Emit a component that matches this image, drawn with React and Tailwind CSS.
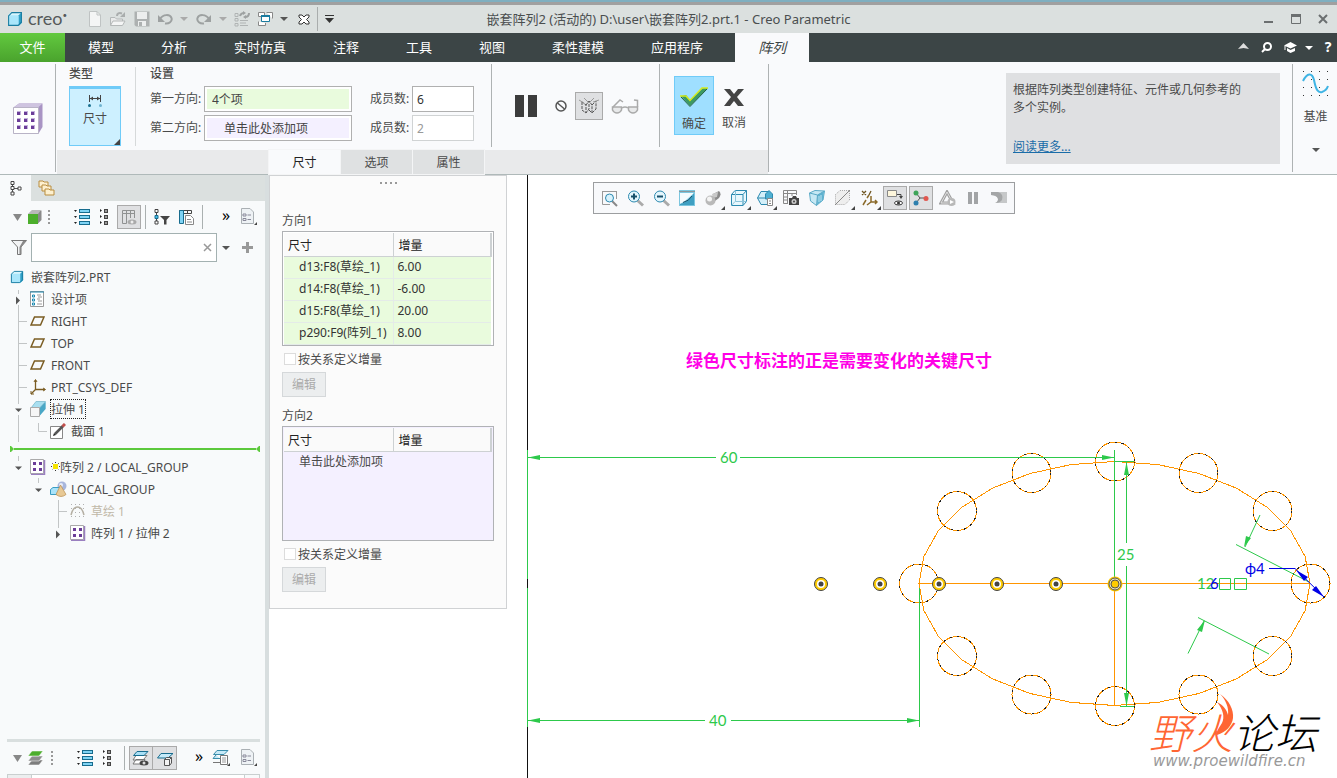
import React, { useState } from 'react';
import clsx from 'clsx';

const MENU_ITEMS = ['模型', '分析', '实时仿真', '注释', '工具', '视图', '柔性建模', '应用程序'];

const DIRECTION_1 = [
  { name: 'd13:F8(草绘_1)', value: '6.00' },
  { name: 'd14:F8(草绘_1)', value: '-6.00' },
  { name: 'd15:F8(草绘_1)', value: '20.00' },
  { name: 'p290:F9(阵列_1)', value: '8.00' },
];

const Svg = ({ w = 16, h = 16, className, children }) => (
  <svg
    width={w}
    height={h}
    viewBox={`0 0 ${w} ${h}`}
    fill="none"
    className={clsx('shrink-0', className)}
    aria-hidden="true"
  >
    {children}
  </svg>
);

const Down = ({ color = '#555' }) => (
  <Svg w={8} h={4}>
    <path d="M0 0H8L4 4Z" fill={color} />
  </Svg>
);

const BlueCube = ({ size = 15 }) => (
  <svg width={size} height={size} viewBox="0 0 15 15" fill="none" className="shrink-0" aria-hidden="true">
    <path d="M1 4L4 1H14V11L11 14H1Z" fill="#a9e6fb" />
    <path d="M1 4L4 1H14L11 4Z" fill="#d8f5fd" />
    <path d="M11 4L14 1V11L11 14Z" fill="#2f9fc6" />
    <path d="M1.500 4.500L4.500 1.500H13.500V10.500L10.500 13.500H1.500Z" stroke="#1a7ca0" />
  </svg>
);

/* ---------- title bar icons ---------- */

const NewIcon = () => (
  <Svg>
    <path d="M2.500 .5H10L13.500 4V15.500H2.500Z" fill="#f4f5f5" stroke="#bfc3c3" />
    <path d="M10 .5V4H13.500" stroke="#bfc3c3" />
  </Svg>
);

const OpenIcon = () => (
  <Svg>
    <path d="M.5 14.500V6.500H5L6.500 8H12.500V10" fill="#e9eaea" stroke="#b4b8b8" />
    <path d="M.5 14.500L3 10H15L12.500 14.500Z" fill="#f4f5f5" stroke="#b4b8b8" />
    <path d="M7 5C7 2.500 9 1.500 12 2.500" stroke="#a9adad" strokeWidth="2" />
    <path d="M10 6H15V1Z" fill="#a9adad" />
  </Svg>
);

const SaveIcon = () => (
  <Svg>
    <path d="M.5 .5H15.500V15.500H2L.5 14Z" fill="#adb1b1" />
    <path d="M3 1H13V8H3Z" fill="#eceeee" />
    <path d="M4 10H12V15H4Z" fill="#eceeee" />
    <path d="M5 11H8V15H5Z" fill="#adb1b1" />
  </Svg>
);

const UndoIcon = ({ flip }) => (
  <Svg className={flip ? '-scale-x-100' : ''}>
    <path d="M3 8C6 3 13 3 14.500 7C15.500 10.500 12 13 8 12.500" stroke="#9da1a1" strokeWidth="2" />
    <path d="M1 4V11H8Z" fill="#9da1a1" />
  </Svg>
);

const RegenIcon = () => (
  <Svg>
    <path d="M1 2.500H4V5.500H1ZM1 7.500H4V10H1ZM1 12.500H4V15H1Z" stroke="#b0b4b4" />
    <path d="M6 9.500H14M6 12H12M6 14.500H14" stroke="#b0b4b4" />
    <path d="M6 5C7 2 9 2 10 2M15 2C15 5 13 6 11 6" stroke="#9da1a1" strokeWidth="2" />
    <path d="M9 0L12 2L9 4ZM12 4L9 6L12 8Z" fill="#9da1a1" />
  </Svg>
);

const WindowsIcon = () => (
  <Svg>
    <path d="M1.500 1.500H7.500V5.500H1.500ZM9.500 1.500H15.500V7.500M1.500 10.500V14.500H8.500V12" fill="#fff" stroke="#888" />
    <path d="M4.500 4.500H12.500V10.500H4.500Z" fill="#fff" stroke="#1a7ca0" />
    <path d="M4 4H13V6H4Z" fill="#1a7ca0" />
  </Svg>
);

const CloseWinIcon = () => (
  <Svg w={12} h={11}>
    <path d="M1 1H4L6 3L8 1H11V3L8.500 5.500L11 8V10H8L6 8L4 10H1V8L3.500 5.500L1 3Z" fill="#fff" stroke="#333" />
  </Svg>
);

/* ---------- ribbon icons ---------- */

const PatternBig = () => (
  <Svg w={30} h={31}>
    <path d="M.5 4.500L6 .5H29.500V24L25.500 30.500H.5Z" fill="#a994c4" />
    <path d="M.5 4.500L6 .5H29.500L25 4.500Z" fill="#cfc4e0" />
    <path d="M.5 4.500H25.500V30.500H.5Z" fill="#fff" stroke="#b9b3c6" />
    {[9, 16, 23].map((y) =>
      [4, 11, 18].map((x) => (
        <g key={`${x}-${y}`}>
          <rect x={x} y={y - 1} width="4" height="4" fill="#c3b1dc" />
          <rect x={x} y={y} width="3" height="3" fill="#6b3d98" />
        </g>
      ))
    )}
  </Svg>
);

const DimensionIcon = () => (
  <Svg w={14} h={14}>
    <path d="M1.500 1V8M12.500 1V8M2 4.500H12" stroke="#444" />
    <path d="M2 4.500L5 2.500V6.500ZM12 4.500L9 2.500V6.500Z" fill="#444" />
    <circle cx="1.500" cy="11.500" r="1.500" fill="#1a7090" />
    <circle cx="12.500" cy="11.500" r="1.500" fill="#6fb3d0" />
  </Svg>
);

const NoIcon = () => (
  <Svg w={12} h={12}>
    <circle cx="6" cy="6" r="5" stroke="#555" strokeWidth="1.500" />
    <path d="M2.500 3L9.500 9" stroke="#555" strokeWidth="1.500" />
  </Svg>
);

const AttachedIcon = () => (
  <Svg w={20} h={18}>
    <path d="M3 5V13L7 16V8ZM7 8L10 4V12L7 16M10 13L13 16V8L10 4M13 8L17 4V12L13 16" stroke="#555" strokeDasharray="3 1" />
    <path d="M0 3L5 6M5 1L10 6L15 1M14 5L20 3" stroke="#999" />
  </Svg>
);

const GlassesIcon = () => (
  <Svg w={28} h={16}>
    <path d="M1.500 9H10.500V12Q9 15 6 15Q3 15 1.500 12ZM17.500 9H26.500V12Q25 15 22 15Q19 15 17.500 12Z" fill="#e8e9ea" stroke="#aaa" strokeWidth="1.500" />
    <path d="M11 10Q14 8 17 10M2 9L9 2L12 4M26.500 9V2.500L23 2" stroke="#aaa" strokeWidth="1.500" />
  </Svg>
);

const CheckIcon = () => (
  <Svg w={30} h={22}>
    <path d="M2 10L7 9L11 14L24 2H29L11 20Z" fill="#3c9a63" />
    <path d="M1 10H7L11 14.500L23 2H29" stroke="#d4ec1c" strokeWidth="1.500" />
    <path d="M2 11L11 20.500L28 3" stroke="#24613d" />
  </Svg>
);

const CrossIcon = () => (
  <Svg w={20} h={17}>
    <path d="M0 0H6L10 5L14 0H20L13 8L20 17H14L10 12L6 17H0L7 8Z" fill="#444" />
  </Svg>
);

const CurveIcon = () => (
  <Svg w={27} h={27}>
    {[1, 9, 17, 25].map((y) => [1, 9, 17, 25].map((x) => <rect key={`${x}-${y}`} x={x} y={y} width="1" height="1" fill="#333" />))}
    <path d="M1 11C5 3 10 2 12 10C14 20 16 23 20 22C23 21 25 19 26 16" stroke="#3fb4e4" strokeWidth="2" />
  </Svg>
);

/* ---------- tree toolbar icons ---------- */

const TreeIcon = () => (
  <Svg w={12} h={16}>
    <path d="M2.500 4V12M4 8.500H8" stroke="#555" />
    <path d="M1 1.500H4V4.500H1ZM1 6.500H4V9.500H1ZM1 12H4V15H1ZM8 7H11V10H8Z" fill="#fff" stroke="#444" />
  </Svg>
);

const FoldersIcon = () => (
  <Svg w={17}>
    {[[1, 1], [4, 5], [7, 9]].map(([x, y]) => (
      <path key={x} d={`M${x} ${y}H${x + 4}L${x + 5} ${y + 1}H${x + 9}V${y + 6}H${x}Z`} fill="#fdf0cf" stroke="#b98d3e" />
    ))}
  </Svg>
);

const GreenCube = () => (
  <Svg w={14} h={14}>
    <path d="M.5 4L4 .5H13.500V10L10 13.500Z" fill="#8a8a8a" />
    <path d="M0 4L4 0H13L10 4Z" fill="#b9b9b9" />
    <rect x="0" y="4" width="10" height="10" fill="#4cae2c" />
  </Svg>
);

const Grip = () => (
  <Svg w={2} h={14}>
    <path d="M1 0V14" stroke="#999" strokeWidth="2" strokeDasharray="2 2" />
  </Svg>
);

const ExpandIcon = () => (
  <Svg>
    {[1, 7, 13].map((y) => (
      <g key={y}>
        <path d={`M0 ${y}H3L1.500 ${y + 2}Z`} fill="#222" />
        <rect x="5.500" y={y - 0.5} width="10" height="3" fill="#7fd3f4" stroke="#176c8e" />
      </g>
    ))}
  </Svg>
);

const CollapseIcon = () => (
  <Svg w={9}>
    {[1, 7, 13].map((y) => (
      <g key={y}>
        <path d={`M0 ${y - 1}V${y + 2}L2 ${y + 0.5}Z`} fill="#222" />
        <rect x="4.500" y={y - 0.5} width="3" height="3" fill="#999" stroke="#444" />
      </g>
    ))}
  </Svg>
);

const ColumnsEye = () => (
  <Svg>
    <path d="M1.500 1.500H13.500V4.500H1.500ZM1.500 4.500V14.500H5.500V1.500M9.500 1.500V9M13.500 4V9" stroke="#8f9191" />
    <ellipse cx="11" cy="13" rx="4.500" ry="2.500" fill="#aaa" />
    <circle cx="11" cy="13" r="1.500" fill="#eee" />
  </Svg>
);

const TreeFilter = () => (
  <Svg>
    <path d="M2.500 1V15" stroke="#444" />
    <path d="M1 .5H4V3.500H1ZM1 12H4V15H1Z" fill="#fff" stroke="#444" />
    <path d="M1 6.500H4V9.500H1Z" fill="#48bde8" stroke="#176c8e" />
    <path d="M6 7H16L12.500 11V15.500H10V11Z" fill="#444" />
  </Svg>
);

const TreeColumns = () => (
  <Svg>
    <path d="M1.500 1.500H13.500V4.500H1.500ZM9.500 1.500V5" stroke="#444" />
    <path d="M1.500 1.500H5.500V14.500H1.500Z" fill="#7fd3f4" stroke="#176c8e" />
    <path d="M7.500 6.500H12.500L15.500 9.500V15.500H7.500Z" fill="#fff" stroke="#888" />
    <path d="M9 10.500H13M9 13H14" stroke="#888" />
  </Svg>
);

const PageIcon = () => (
  <Svg w={18} h={18}>
    <path d="M1.500 .5H10L13.500 4V15.500H1.500Z" fill="#eef2f5" stroke="#aab0b4" />
    <path d="M3 6H6V8H3ZM3 10.500H6V12.500H3ZM7.500 7H11M7.500 11.500H11" stroke="#889" />
    <path d="M17 14V17H14Z" fill="#444" />
  </Svg>
);

const LayerSheet = ({ color, y }) => <path d={`M5 ${y}H16L12 ${y + 5}H1Z`} fill={color} stroke="#fff" strokeWidth=".5" />;

const LayersIcon = () => (
  <Svg w={17}>
    <LayerSheet color="#7d7d7d" y={10} />
    <LayerSheet color="#8d8d8d" y={6} />
    <LayerSheet color="#4cae2c" y={1} />
  </Svg>
);

const LayersEye = () => (
  <Svg w={18}>
    <path d="M4 9.500H13L10 14H1ZM4 5.500H15L11 10H1Z" fill="#fff" stroke="#777" />
    <path d="M5 1.500H16L12 5.500H1.500Z" fill="#a9dff5" stroke="#176c8e" />
    <ellipse cx="12" cy="13" rx="4.500" ry="2.500" fill="#444" />
    <circle cx="12" cy="13" r="1.500" fill="#ddd" />
  </Svg>
);

const LayerBox = () => (
  <Svg w={18}>
    <path d="M5 3.500H17L12 8H1.500Z" fill="#c6ebfa" stroke="#176c8e" />
    <path d="M8.500 9.500L10.500 7.500H15.500V13L13.500 15.500H8.500ZM8.500 9.500H13.500V15.500M13.500 9.500L15.500 7.500" fill="#f3f3f3" stroke="#555" />
  </Svg>
);

const LayerList = () => (
  <Svg w={18} h={18}>
    <path d="M4 9.500H8M4 5.500H8M1 13.500H8" stroke="#777" />
    <path d="M5 1.500H16L12 5.500H1.500ZM4 6L1 9.500H8" fill="#c6e9f7" stroke="#3a8dab" />
    <path d="M8.500 6.500H15.500V15.500H8.500Z" fill="#fff" stroke="#777" />
    <path d="M10 9H14M10 11H14M10 13H14" stroke="#999" />
    <path d="M18 14V17H15Z" fill="#444" />
  </Svg>
);

const FunnelIcon = () => (
  <Svg w={16} h={15}>
    <path d="M.5 .5H15.500L10 7V14.500H6.500V7Z" fill="#f2f3f4" stroke="#777" />
    <path d="M8.500 7V14H10V7L15 1H12Z" fill="#888" />
  </Svg>
);

/* ---------- model tree node icons ---------- */

const DesignItems = () => (
  <Svg w={14}>
    <path d="M.5 .5H13.500V15.500H.5Z" fill="#fff" stroke="#999" />
    <path d="M0 1H14" stroke="#1a88b0" />
    <path d="M2.500 4H4.500V6H2.500ZM2.500 8H4.500V10H2.500ZM2.500 12H4.500V14H2.500Z" stroke="#1a88b0" />
    <path d="M7 4H11M8 6H12M7 8H10M8 10H12M7 13H12" stroke="#999" />
  </Svg>
);

const DatumPlane = () => (
  <Svg w={15} h={10}>
    <path d="M4.500 1H14L10.500 9H1Z" stroke="#7a5c22" strokeWidth="1.500" />
  </Svg>
);

const CsysIcon = () => (
  <Svg>
    <path d="M5.500 1V10.500H15M5.500 10.500L1 15" stroke="#7a5c22" strokeWidth="1.300" />
    <path d="M4 3L5.500 .5L7 3M13 9L15.500 10.500L13 12M1 12V15H4" stroke="#7a5c22" />
  </Svg>
);

const ExtrudeIcon = () => (
  <Svg>
    <path d="M1 7L6 .5H15.500V8L9 15Z" fill="#7fc8e0" />
    <path d="M9 7L15.500 1V8L9.500 15Z" fill="#4aa7c6" />
    <path d="M1 7L6 .5H15.500L9.500 7Z" fill="#a9dff0" stroke="#7fb9cc" strokeWidth=".7" />
    <path d="M.5 6.500H9.500V15.500H.5Z" fill="#f6f6f6" stroke="#aaa" />
  </Svg>
);

const SectionIcon = () => (
  <Svg>
    <path d="M.5 3.500H12.500V15.500H.5Z" fill="#fff" stroke="#888" />
    <path d="M5 11L13 3" stroke="#555" strokeWidth="2.500" />
    <path d="M12.500 3.500L15 1" stroke="#c0504d" strokeWidth="3" />
    <path d="M3 13L4 10L6 12Z" fill="#222" />
  </Svg>
);

const PatternIcon = () => (
  <Svg>
    <path d="M.5 .5H13.500V14.500H.5Z" fill="#fff" stroke="#aaa" />
    <path d="M14.500 1V15.500H1" stroke="#9a7fc0" strokeWidth="1.500" />
    {[4, 10].map((y) => [3, 9].map((x) => <rect key={`${x}-${y}`} x={x} y={y - 1} width="3" height="3" fill="#6b3d98" />))}
  </Svg>
);

const GroupIcon = () => (
  <Svg w={17}>
    <circle cx="12" cy="5" r="4.500" fill="#a8b6dc" />
    <circle cx="11" cy="4" r="2" fill="#e6ebf8" />
    <path d="M.5 8.500L3 6.500H9.500V11.500L7.500 13.500H.5Z" fill="#a9e3fa" stroke="#3a9dc4" />
    <path d="M10.500 4L16 13.500Q11 17.500 6 13.500Z" fill="#e8c995" stroke="#b98d4e" strokeWidth=".7" />
  </Svg>
);

const SketchIcon = () => (
  <Svg>
    {[1, 5, 9, 13].map((y) => [1, 5, 9, 13].map((x) => <rect key={`${x}-${y}`} x={x} y={y} width="1" height="1" fill="#b0b0b0" />))}
    <path d="M1 12Q3 4 7.500 4Q12 4 14 12" stroke="#b5b0a4" strokeWidth="1.500" />
  </Svg>
);

/* ---------- graphics toolbar icons ---------- */

const Magnifier = ({ sign }) => (
  <Svg w={17} h={17}>
    <path d="M10 10L16 15.500" stroke="#aaa" strokeWidth="3" />
    <circle cx="7" cy="6.500" r="5.500" fill="#e4f6fd" stroke="#2d8ab0" />
    <path d={sign === '+' ? 'M4 6.500H10M7 3.500V9.500' : 'M4 6.500H10'} stroke="#17506a" strokeWidth="2" />
  </Svg>
);

const GRAPHICS_TOOLS = [
  {
    label: '重新调整',
    icon: (
      <Svg w={17} h={17}>
        <path d="M1 1.500H16M1.500 1V14.500H9M15.500 1V9" stroke="#999" />
        <path d="M11 11L16 16" stroke="#888" strokeWidth="2" />
        <circle cx="8.500" cy="8" r="4" fill="#d9f2fc" stroke="#2d8ab0" />
      </Svg>
    ),
  },
  { label: '放大', icon: <Magnifier sign="+" /> },
  { label: '缩小', icon: <Magnifier sign="-" /> },
  {
    label: '重画',
    icon: (
      <Svg>
        <path d="M0 0H16V16H0Z" fill="#7cc6df" />
        <path d="M1 3H15L6 11L1 14Z" fill="#f4fbfe" />
        <path d="M1 15V14Q10 12 15 3V15Z" fill="#3f9fc2" />
        <path d="M4 12.500Q10 11 13 6" stroke="#174f68" />
        <path d="M0 1.500H16" stroke="#8d979b" />
      </Svg>
    ),
  },
  {
    label: '显示样式',
    menu: true,
    icon: (
      <Svg>
        <path d="M8 4L14 1Q17 4 14 8L10 11Z" fill="#8a8a8a" />
        <path d="M7 4L13 2L12 7L8 8Z" fill="#c9c9c9" />
        <circle cx="5.500" cy="10.500" r="5" fill="#b9b9b9" />
        <circle cx="4.500" cy="9" r="2.500" fill="#f4f4f4" />
      </Svg>
    ),
  },
  {
    label: '隐藏线',
    menu: true,
    icon: (
      <Svg>
        <path d="M.5 4.500L4 .5H15.500V11.500L12 15.500H.5Z" fill="#e8f7fd" stroke="#2d8ab0" />
        <path d="M.5 4.500H12V15.500M12 4.500L15.500 .5" stroke="#2d8ab0" />
        <path d="M4.500 .5V11.500H15.500M4 11.500L.5 15.500" stroke="#8cc4da" />
      </Svg>
    ),
  },
  {
    label: '视图管理器',
    menu: true,
    icon: (
      <Svg>
        <path d="M.5 8L4 1.500H12L15.500 8L12 14.500H4Z" fill="#d3eff9" stroke="#2d8ab0" />
        <path d="M.5 8H9" stroke="#2d8ab0" />
        <path d="M8.500 4L12 .5L15.500 4V9H8.500Z" fill="#4fb0d2" stroke="#2d8ab0" />
        <path d="M10.500 8.500H15.500V15.500H10.500Z" fill="#fff" stroke="#888" />
        <path d="M12 11H14M12 13.500H14" stroke="#888" />
      </Svg>
    ),
  },
  {
    label: '透视图',
    icon: (
      <Svg>
        <path d="M.5 .5H13.500V5M.5 .5V13.500H5M.5 3.500H13.500M.5 7H5M.5 10H5M4.500 .5V13.500M9 3.500V6" stroke="#888" />
        <path d="M6 8H9L10 6H13L14 8H16V15H6Z" fill="#444" />
        <circle cx="11" cy="11.500" r="2.500" fill="#ccc" />
        <circle cx="11" cy="11.500" r="1" fill="#444" />
      </Svg>
    ),
  },
  {
    label: '截面',
    icon: (
      <Svg>
        <path d="M.5 3L6 .5L15.500 1L14 10L7.500 15.500L1.500 11Z" fill="#c6e8f4" stroke="#5aa9c6" />
        <path d="M8.500 5L15 1.500L14 10L8 15Z" fill="#5fb2d0" />
        <path d="M.5 3L8.500 5L15.500 1M8.500 5L7.500 15.500" stroke="#5aa9c6" />
        <path d="M10 6V12M12 5V11" stroke="#bfe6f3" />
      </Svg>
    ),
  },
  {
    label: '基准显示',
    menu: true,
    icon: (
      <Svg>
        <path d="M.5 4.500L5 .5H14.500V10L10 14.500H.5Z" stroke="#aaa" strokeDasharray="1 1" fill="#eee" />
        <path d="M0 15L15 0" stroke="#888" />
      </Svg>
    ),
  },
  {
    label: '基准过滤器',
    menu: true,
    icon: (
      <Svg w={17}>
        <path d="M1 1L5 5M5 1L1 5M10 1L8 5" stroke="#6e5420" strokeWidth="1.300" />
        <path d="M2 15L5 10M6 8L8 5M10 6V12H16M10 12L6 15M14 10L16 12L14 14" stroke="#8a6a2a" strokeWidth="1.500" />
      </Svg>
    ),
  },
  {
    label: '注释显示',
    pressed: true,
    icon: (
      <Svg>
        <path d="M.5 .5H9.500V6.500H.5Z" fill="#fdf6dc" stroke="#888" />
        <path d="M10 4.500H14V8" stroke="#444" />
        <path d="M12 6H16L14 9Z" fill="#444" />
        <ellipse cx="11.500" cy="13" rx="4" ry="2" stroke="#333" fill="#fff" />
        <circle cx="11.500" cy="13" r="1.500" fill="#333" />
      </Svg>
    ),
  },
  {
    label: '旋转中心',
    pressed: true,
    icon: (
      <Svg>
        <path d="M3 3L7 8L3 13M7 8H13" stroke="#555" />
        <circle cx="3" cy="3" r="2.500" fill="#3fa55a" />
        <circle cx="3" cy="13" r="2.500" fill="#2d7fae" />
        <circle cx="13" cy="8.500" r="2.500" fill="#e0574f" />
      </Svg>
    ),
  },
  {
    label: '仿真',
    icon: (
      <Svg w={17}>
        <path d="M8 2L14 13H2Z" stroke="#a0a0a0" strokeWidth="3" />
        <path d="M8 2L14 13H2Z" stroke="#e0e0e0" />
        <circle cx="12.500" cy="12" r="4" fill="#b8b8b8" />
        <path d="M11 10L15 12L11 14Z" fill="#fff" />
      </Svg>
    ),
  },
  {
    label: '暂停',
    icon: (
      <Svg>
        <path d="M3 2H7V14H3ZM9 2H13V14H9Z" fill="#a2a4a6" />
      </Svg>
    ),
  },
  {
    label: '继续',
    icon: (
      <Svg w={17} h={14}>
        <path d="M0 1H16V12H4Q7 11 7 8Q7 5 0 4Z" fill="#c6c8c9" />
        <path d="M0 1H7Q13 3 11 9Q9 12 4 12Q7 11 7 8Q6 4 0 4Z" fill="#a4a6a7" />
      </Svg>
    ),
  },
];

const TitleBar = () => (
  <header className="border-t-3 border-[#a0a0a0] bg-[#dbe0df]">
    <div className="grid h-7 grid-cols-[1fr_auto_1fr] items-center">
      <div className="flex items-center pl-[7px]">
        <BlueCube size={16} />
        <span className="ml-[5px] w-10 pb-[2px] font-['Lato',sans-serif] text-[18px] leading-5 text-[#55595a]">
          creo<sup className="align-[3px] text-[8px] leading-none">•</sup>
        </span>
        <div className="ml-[19px] flex items-center gap-[7px]">
          <button type="button" aria-label="新建"><NewIcon /></button>
          <button type="button" aria-label="打开"><OpenIcon /></button>
          <button type="button" aria-label="保存" className="ml-px"><SaveIcon /></button>
          <button type="button" aria-label="撤消"><UndoIcon /></button>
          <Down color="#aaa" />
          <button type="button" aria-label="重做" className="ml-px"><UndoIcon flip /></button>
          <Down color="#aaa" />
          <button type="button" aria-label="重新生成"><RegenIcon /></button>
          <button type="button" aria-label="窗口"><WindowsIcon /></button>
          <Down />
          <button type="button" aria-label="关闭窗口" className="ml-[3px]"><CloseWinIcon /></button>
          <span className="h-6 w-px bg-[#a9adad]" />
          <button type="button" aria-label="自定义">
            <Svg w={9} h={8}>
              <path d="M0 .5H9" stroke="#333" />
              <path d="M0 3H9L4.500 8Z" fill="#333" />
            </Svg>
          </button>
        </div>
      </div>
      <h1 className="text-[13px] leading-5 text-[#4a4e4f]">嵌套阵列2 (活动的) D:\user\嵌套阵列2.prt.1 - Creo Parametric</h1>
      <div className="flex items-center justify-end gap-[17px] pr-[9px] text-[#6b6f70]">
        <button type="button" aria-label="最小化">
          <Svg w={10} h={10}>
            <path d="M0 8H9" stroke="currentColor" strokeWidth="2" />
          </Svg>
        </button>
        <button type="button" aria-label="最大化">
          <Svg w={10} h={10}>
            <path d="M.5 .5H9.500V9.500H.5Z" stroke="currentColor" />
            <path d="M0 1.500H10" stroke="currentColor" strokeWidth="3" />
          </Svg>
        </button>
        <button type="button" aria-label="关闭">
          <Svg w={10} h={10}>
            <path d="M1 1L9 9M9 1L1 9" stroke="currentColor" strokeWidth="2" />
          </Svg>
        </button>
      </div>
    </div>
  </header>
);

const MenuBar = () => (
  <nav className="flex h-[29px] items-stretch bg-[#3c4546] text-[13px] text-white">
    <button type="button" className="w-[65px] bg-linear-to-b from-[#62c93f] to-[#4aa32d]">
      文件
    </button>
    <div className="ml-[23px] flex gap-[47px]">
      {MENU_ITEMS.map((item) => (
        <button key={item} type="button">
          {item}
        </button>
      ))}
    </div>
    <button type="button" className="ml-8 w-[74px] bg-[#f9fafc] text-[14px] text-[#3c4546] italic">
      阵列
    </button>
    <div className="ml-auto flex items-center gap-2 pr-[3px]">
      <button type="button" aria-label="最小化功能区" className="mr-1 pb-1">
        <Svg w={11} h={8}>
          <path d="M0 7L5.500 1L11 7L5.500 6Z" fill="#ddd" />
        </Svg>
      </button>
      <button type="button" aria-label="搜索" className="mr-1">
        <Svg w={11} h={11}>
          <circle cx="6.500" cy="4.500" r="3.500" stroke="#fff" strokeWidth="2" />
          <path d="M4 7L1 10" stroke="#fff" strokeWidth="2" />
        </Svg>
      </button>
      <button type="button" aria-label="学习">
        <Svg w={13} h={11}>
          <path d="M6.500 0L13 3.500L6.500 6.500L0 3.500Z" fill="#fff" />
          <path d="M3 6L6.500 8L11 6V9L6.500 11L3 9Z" fill="#fff" />
          <path d="M1 4V8" stroke="#fff" />
        </Svg>
      </button>
      <Down color="#fff" />
      <button type="button" aria-label="帮助" className="ml-px w-3 pb-[2px] text-[14px] font-bold">
        ?
      </button>
    </div>
  </nav>
);

const Divider = ({ className }) => <span className={clsx('w-px shrink-0 bg-[#aeb2b3]', className)} />;

const Collector = ({ id, label, value, tone }) => (
  <div className="flex h-[26px] items-center">
    <label htmlFor={id} className="w-[54px] whitespace-nowrap">
      {label}
    </label>
    <input
      id={id}
      defaultValue={value}
      className={clsx(
        'h-[26px] w-[148px] border border-[#b0b0b0] text-[#444] shadow-[inset_0_0_0_2px_white] outline-none',
        tone === 'green' ? 'bg-[#e9fbdd] pl-[7px]' : 'bg-[#f4f0ff] pl-[19px]'
      )}
    />
  </div>
);

const Count = ({ id, value, disabled }) => (
  <div className="flex h-[26px] items-center">
    <label htmlFor={id} className="w-[42px] whitespace-nowrap">
      成员数:
    </label>
    <input
      id={id}
      defaultValue={value}
      disabled={disabled}
      className="h-[26px] w-[62px] border border-[#b0b0b0] bg-white pl-1 text-[#333] outline-none disabled:border-[#d0d3d4] disabled:text-[#999]"
    />
  </div>
);

const Ribbon = ({ tab, setTab }) => (
  <section className="flex h-[113px] border-b border-[#afb9b9] bg-[#f9fafc] text-[12px] leading-4 text-[#4a4a4a]">
    <div className="flex w-[55px] items-center justify-center">
      <PatternBig />
    </div>
    <Divider className="my-[2px]" />
    <div className="mx-px flex w-[711px] flex-col">
      <div className="flex flex-1">
        <div className="flex w-[66px] flex-col pt-1 pl-3">
          <h2 className="h-5 font-medium">类型</h2>
          <button
            type="button"
            className="relative flex h-[60px] w-[52px] flex-col items-center border border-t-3 border-[#70cbf8] bg-[#cdf0ff] pt-[5px]"
          >
            <DimensionIcon />
            <span className="mt-[3px]">尺寸</span>
            <span className="absolute right-0 bottom-0">
              <Svg w={6} h={6}>
                <path d="M6 0V6H0Z" fill="#444" />
              </Svg>
            </span>
          </button>
        </div>
        <Divider className="mt-[5px] mb-1 ml-3 bg-[#d6d9da]" />
        <div className="flex flex-col pt-1 pl-[14px]">
          <h2 className="h-5 font-medium">设置</h2>
          <div className="flex gap-[18px]">
            <div className="flex flex-col gap-[3px]">
              <Collector id="dir1" label="第一方向:" value="4个项" tone="green" />
              <Collector id="dir2" label="第二方向:" value="单击此处添加项" />
            </div>
            <div className="flex flex-col gap-[3px]">
              <Count id="count1" value="6" />
              <Count id="count2" value="2" disabled />
            </div>
          </div>
        </div>
        <Divider className="mt-[2px] mb-[3px] ml-[17px]" />
        <div className="flex w-[167px] items-center gap-2 pl-[22px]">
          <button type="button" aria-label="暂停" className="mr-[9px]">
            <Svg w={24} h={22}>
              <path d="M1 0H10V22H1ZM14 0H23V22H14Z" fill="#3c3c3c" />
            </Svg>
          </button>
          <button type="button" aria-label="无预览"><NoIcon /></button>
          <button
            type="button"
            aria-label="预览"
            className="flex size-7 items-center justify-center border border-[#aaa] bg-[#dfe0e2]"
          >
            <AttachedIcon />
          </button>
          <button type="button" aria-label="校验"><GlassesIcon /></button>
        </div>
        <Divider className="mt-[2px] mb-[3px]" />
        <div className="flex gap-[7px] pt-[14px] pl-[14px]">
          <button type="button" className="flex h-[59px] w-10 flex-col items-center border border-[#70cbf8] bg-[#9fdfff] pt-[9px]">
            <CheckIcon />
            <span className="mt-2">确定</span>
          </button>
          <button type="button" className="flex h-[59px] w-[26px] flex-col items-center pt-[13px]">
            <CrossIcon />
            <span className="mt-[9px] whitespace-nowrap">取消</span>
          </button>
        </div>
      </div>
      <div className="flex h-6 gap-px bg-[#e9eaeb] pl-[212px]">
        {['尺寸', '选项', '属性'].map((name) => (
          <button
            key={name}
            type="button"
            onClick={() => setTab(name)}
            className={clsx(
              'w-[71px] pt-[2px] outline outline-[#f4f5f6]',
              tab === name ? 'bg-[#f9fafc] text-[#222]' : 'bg-[#dfe1e2]'
            )}
          >
            {name}
          </button>
        ))}
      </div>
    </div>
    <Divider className="my-[2px] -ml-px" />
    <aside className="mt-[11px] mr-3 mb-[10px] ml-auto w-[274px] bg-[#dfe0e2] px-[7px] pt-2 leading-[18px]">
      <p className="w-[236px]">根据阵列类型创建特征、元件或几何参考的多个实例。</p>
      <a href="#more" className="mt-[21px] block text-[#1a6ca8] underline">
        阅读更多...
      </a>
    </aside>
    <Divider className="my-[2px]" />
    <button type="button" className="flex w-[44px] flex-col items-center pt-2 pl-px">
      <CurveIcon />
      <span className="mt-3 mb-[23px]">基准</span>
      <Down />
    </button>
  </section>
);

const GUIDES = {
  line: 'M8.500 0V22',
  tee: 'M8.500 0V22M8.500 11.500H17',
  elbow: 'M8.500 3V11.500H17',
  stub: 'M8.500 0V5',
  open: 'M8.500 0V6M8.500 17V22',
  closed: 'M8.500 2V6M8.500 17V22',
  last: 'M8.500 0V6',
  blank: '',
};

const Guide = ({ kind }) => (
  <Svg w={20} h={22}>
    <path d={GUIDES[kind]} stroke="#c2c5c6" />
    {(kind === 'open' || kind === 'stub') && <path d="M5 10.500H12L8.500 14Z" fill="#555" />}
    {(kind === 'closed' || kind === 'last') && <path d="M6 8.500V16.500L10 12.500Z" fill="#555" />}
  </Svg>
);

const TreeRow = ({ guides = [], icon, children, selected, dim }) => (
  <li className={clsx('flex h-[22px] items-center pl-[10px]', dim ? 'text-[#c0b8a8]' : 'text-[#4a4a4a]')}>
    {guides.map((kind, i) => (
      <Guide key={i} kind={kind} />
    ))}
    <span className="flex w-[21px] shrink-0 items-center">{icon}</span>
    <span className={clsx('pt-[2px] whitespace-nowrap', selected && 'outline outline-dotted outline-[#222]')}>
      {children}
    </span>
  </li>
);

const ToolbarDivider = () => <span className="h-6 w-px shrink-0 bg-[#aab0b0]" />;

const ModelTree = () => {
  const [filter, setFilter] = useState('');
  return (
    <aside className="flex w-[269px] shrink-0 flex-col border-r-4 border-[#d8dedf] bg-[#f8fafb] text-[12px] leading-4">
      <div className="flex h-[26px] bg-[#dbe0df]">
        <button type="button" aria-label="模型树" className="flex w-[31px] items-center justify-center bg-[#f8fafb]">
          <TreeIcon />
        </button>
        <button type="button" aria-label="文件夹浏览器" className="flex w-[31px] items-center justify-center">
          <FoldersIcon />
        </button>
      </div>
      <div className="flex h-8 items-center pl-[13px]">
        <Svg w={9} h={7}>
          <path d="M0 0H9L4.500 7Z" fill="#888" />
        </Svg>
        <button type="button" aria-label="模型" className="ml-[6px]"><GreenCube /></button>
        <span className="ml-[6px]"><Grip /></span>
        <button type="button" aria-label="全部展开" className="ml-6"><ExpandIcon /></button>
        <button type="button" aria-label="全部折叠" className="ml-[10px]"><CollapseIcon /></button>
        <button type="button" aria-label="树列" className="ml-2 flex size-6 items-center justify-center border border-[#aaa] bg-[#dfe0e2]">
          <ColumnsEye />
        </button>
        <span className="ml-1 flex"><ToolbarDivider /></span>
        <button type="button" aria-label="树过滤器" className="ml-2"><TreeFilter /></button>
        <button type="button" aria-label="树设置" className="ml-2"><TreeColumns /></button>
        <span className="ml-2 flex"><ToolbarDivider /></span>
        <button type="button" aria-label="更多" className="ml-[19px] pb-1 text-[16px] leading-4">»</button>
        <button type="button" aria-label="显示" className="ml-[10px]"><PageIcon /></button>
      </div>
      <div className="flex h-[29px] items-center pl-[11px]">
        <FunnelIcon />
        <div className="relative ml-1 h-[29px] flex-1">
          <input
            aria-label="过滤模型树"
            value={filter}
            onChange={(e) => setFilter(e.target.value)}
            className="h-full w-full border border-[#a3b1b1] bg-white px-1 outline-none"
          />
          <button type="button" aria-label="清除" onClick={() => setFilter('')} className="absolute top-[10px] right-[5px]">
            <Svg w={9} h={9}>
              <path d="M1 1L8 8M8 1L1 8" stroke="#999" strokeWidth="1.500" />
            </Svg>
          </button>
        </div>
        <button type="button" aria-label="过滤器选项" className="mr-3 ml-[5px]"><Down /></button>
        <button type="button" aria-label="添加" className="mr-3">
          <Svg w={11} h={11}>
            <path d="M0 5.500H11M5.500 0V11" stroke="#999" strokeWidth="3" />
          </Svg>
        </button>
      </div>
      <ul className="mt-1">
        <TreeRow icon={<BlueCube size={14} />}>嵌套阵列2.PRT</TreeRow>
        <TreeRow guides={['closed']} icon={<DesignItems />}>设计项</TreeRow>
        <TreeRow guides={['tee']} icon={<DatumPlane />}>RIGHT</TreeRow>
        <TreeRow guides={['tee']} icon={<DatumPlane />}>TOP</TreeRow>
        <TreeRow guides={['tee']} icon={<DatumPlane />}>FRONT</TreeRow>
        <TreeRow guides={['tee']} icon={<CsysIcon />}>PRT_CSYS_DEF</TreeRow>
        <TreeRow guides={['open']} icon={<ExtrudeIcon />} selected>拉伸 1</TreeRow>
        <TreeRow guides={['line', 'elbow']} icon={<SectionIcon />}>截面 1</TreeRow>
        <li className="mr-[5px] ml-[10px] flex h-[14px] items-end pb-1">
          <Svg w={4} h={6}>
            <path d="M0 0H1L4 3L1 6H0Z" fill="#5cc93c" />
          </Svg>
          <span className="mb-[2px] h-[2px] flex-1 bg-[#5cc93c]" />
          <Svg w={4} h={6}>
            <path d="M4 0H3L0 3L3 6H4Z" fill="#5cc93c" />
          </Svg>
        </li>
        <TreeRow guides={['stub']} icon={<PatternIcon />}>
          <Svg w={9} h={9} className="mb-1 inline-block">
            <path d="M4.500 0V9M0 4.500H9M1 1L8 8M8 1L1 8" stroke="#333" strokeDasharray="1 1" />
            <rect x="2" y="2" width="5" height="5" fill="#f5e400" />
          </Svg>
          阵列 2 / LOCAL_GROUP
        </TreeRow>
        <TreeRow guides={['blank', 'stub']} icon={<GroupIcon />}>LOCAL_GROUP</TreeRow>
        <TreeRow guides={['blank', 'blank', 'tee']} icon={<SketchIcon />} dim>草绘 1</TreeRow>
        <TreeRow guides={['blank', 'blank', 'last']} icon={<PatternIcon />}>阵列 1 / 拉伸 2</TreeRow>
      </ul>
      <div className="mt-auto mr-[5px] ml-[7px] h-[3px] shrink-0 bg-[#d9dfdf]" />
      <div className="flex h-8 shrink-0 items-center pl-[13px]">
        <Svg w={9} h={7}>
          <path d="M0 0H9L4.500 7Z" fill="#888" />
        </Svg>
        <button type="button" aria-label="层" className="ml-[5px]"><LayersIcon /></button>
        <span className="ml-[7px]"><Grip /></span>
        <button type="button" aria-label="展开层" className="ml-6"><ExpandIcon /></button>
        <button type="button" aria-label="折叠层" className="ml-[10px]"><CollapseIcon /></button>
        <span className="ml-3 flex"><ToolbarDivider /></span>
        <div className="ml-1 flex border border-[#aaa] bg-[#dfe0e2]">
          <button type="button" aria-label="显示层" className="flex h-[22px] w-[23px] items-center justify-center border-r border-[#aaa]">
            <LayersEye />
          </button>
          <button type="button" aria-label="层框" className="flex h-[22px] w-[23px] items-center justify-center">
            <LayerBox />
          </button>
        </div>
        <button type="button" aria-label="更多层命令" className="ml-[18px] pb-1 text-[16px] leading-4">»</button>
        <button type="button" aria-label="层列表" className="ml-[9px]"><LayerList /></button>
        <button type="button" aria-label="层设置" className="ml-[10px]"><PageIcon /></button>
      </div>
      <div className="mr-[5px] ml-[7px] flex h-1 shrink-0 border border-b-0 border-[#c9cfcf]">
        <span className="w-6 border-r border-[#c9cfcf] bg-[#eceeef]" />
        <span className="flex-1 bg-white" />
        <span className="w-[15px] border-l border-[#c9cfcf]" />
      </div>
    </aside>
  );
};

const DirectionSection = ({ title, id, rows }) => (
  <section>
    <h3 className="mb-px h-5 leading-[22px]">{title}</h3>
    <div className={clsx('h-[115px] border border-[#b0b2b5] p-px', rows ? 'bg-white' : 'bg-[#f4f0ff]')}>
      <table className="w-full table-fixed border-collapse">
        <thead>
          <tr className="h-[23px] bg-[#fafafa] text-[#222]">
            <th className="w-[109px] border-r border-b border-[#cdd1d3] pt-[3px] pl-1 text-left font-normal">尺寸</th>
            <th className="border-r-2 border-b border-[#cdd1d3] pt-[3px] pl-[5px] text-left font-normal">增量</th>
          </tr>
        </thead>
        <tbody>
          {rows ? (
            rows.map((row) => (
              <tr key={row.name} className="h-[22px] bg-[#e9fbdd] text-[#333]">
                <td className="border-r border-b border-[#e4ebe8] pl-[15px] whitespace-nowrap">{row.name}</td>
                <td className="border-b border-[#e4ebe8] pl-1">{row.value}</td>
              </tr>
            ))
          ) : (
            <tr className="h-[22px]">
              <td className="pl-[15px]" colSpan={2}>
                单击此处添加项
              </td>
            </tr>
          )}
        </tbody>
      </table>
    </div>
    <div className="mt-1 flex h-[18px] items-center pl-[2px]">
      <input
        id={id}
        type="checkbox"
        className="mr-[2px] size-3 appearance-none border border-[#dcdcdc] bg-white checked:bg-[#70cbf8]"
      />
      <label htmlFor={id} className="pt-[2px]">
        按关系定义增量
      </label>
    </div>
    <button type="button" disabled className="mt-1 h-[25px] w-11 border border-[#d5d8da] bg-[#eceeef] text-[#aaa]">
      编辑
    </button>
  </section>
);

const DimensionsPanel = () => (
  <div className="w-[238px] shrink-0 self-start border border-[#d0d2d4] bg-[#fbfbfb] px-3 pb-4 text-[12px] leading-4 text-[#4a4a4a]">
    <div className="flex h-[34px] justify-center gap-[3px] pt-[6px]">
      {[0, 1, 2, 3].map((i) => (
        <span key={i} className="size-[2px] bg-[#999]" />
      ))}
    </div>
    <div className="flex flex-col gap-2">
      <DirectionSection title="方向1" id="relation1" rows={DIRECTION_1} />
      <DirectionSection title="方向2" id="relation2" />
    </div>
  </div>
);

/* ---------- model drawing ---------- */

const CX = 1114.5;
const CY = 583.5;

const ELLIPSE = Array.from({ length: 28 }, (_, i) => {
  const a = (i / 28) * Math.PI * 2;
  return `${(CX + Math.cos(a) * 195.5).toFixed(1)},${(CY + Math.sin(a) * 122).toFixed(1)}`;
}).join(' ');

const HOLES = [
  [1115, 461.5], [1198.5, 473], [1272.5, 511], [1310.5, 583.5], [1272.5, 656], [1198.5, 694.5],
  [1115, 706], [1031.5, 694.5], [957, 656], [919, 583.5], [957, 511], [1031.5, 473],
];

const MEMBERS = [821, 880, 939, 997, 1056];

const ModelView = () => (
  <svg
    viewBox="507 175 830 603"
    preserveAspectRatio="xMinYMin meet"
    fill="none"
    className="absolute inset-0 h-full w-full"
    role="img"
    aria-label="模型视图"
  >
    <path d="M527.500 175V450M527.500 579V588M527.500 727V778" stroke="#111" />
    <path d="M527.500 450V579M527.500 588V727" stroke="#2dc94b" />

    <g shapeRendering="crispEdges" stroke="#ff9500">
      <polygon points={ELLIPSE} />
      <path d={`M919 ${CY}H1310M${CX} ${CY}V705`} />
      {HOLES.map(([x, y]) => (
        <g key={`${x}-${y}`}>
          <circle cx={x} cy={y} r="19.500" />
          <circle cx={x} cy={y} r="19.500" stroke="#222" strokeDasharray="2 5" />
        </g>
      ))}
    </g>

    <g stroke="#2dc94b">
      <path d="M528 457.500H716M740 457.500H1114M1114.500 450V580" />
      <path d="M528 720.500H705M731 720.500H919M919.500 588V727" />
      <path d="M1126.500 462V543M1126.500 566V706M1114 461.500H1134M1120 706.500H1134" />
      <path d="M1260 515L1245 547M1236 544.500L1309 582M1188 653.500L1204 621M1198 617.500L1269 654" />
      <path d="M1219.500 578.500H1230.500V589.500H1219.500ZM1234.500 578.500H1246.500V589.500H1234.500Z" />
    </g>
    <g fill="#2dc94b">
      <path d="M528 457.500L540 455V460ZM1114 457.500L1102 455V460Z" />
      <path d="M528 720.500L540 718V723ZM919 720.500L907 718V723Z" />
      <path d="M1126.500 462L1124 475H1129ZM1126.500 706L1124 693H1129Z" />
      <path d="M1244 547L1246 536L1251 538ZM1205 620L1197 630L1202 632Z" />
    </g>
    <g stroke="#0000e6" fill="#0000e6">
      <path d="M1269 568.500H1295L1324 597" fill="none" />
      <path d="M1296 570L1308 577L1304 581ZM1324 597L1312 590L1316 586Z" stroke="none" />
    </g>

    <g className="font-['Lato',sans-serif] text-[15px]" fill="#2dc94b">
      <text x="720" y="463">60</text>
      <text x="709" y="726">40</text>
      <text x="1117" y="560">25</text>
      <text x="1197" y="589">12</text>
      <text x="1210" y="589" fill="#0000e6">6</text>
      <text x="1245" y="574" fill="#0000e6">ϕ4</text>
    </g>

    {MEMBERS.map((x) => (
      <g key={x}>
        <circle cx={x} cy="584" r="6.500" fill="#ffcc00" stroke="#444" />
        <circle cx={x} cy="584" r="4" fill="#fff" />
        <circle cx={x} cy="584" r="2.500" fill="#444" />
      </g>
    ))}
    <circle cx="1115" cy="584" r="7.500" fill="#ffcc00" />
    <circle cx="1115" cy="584" r="6" fill="#e8e0b0" stroke="#555" />
    <circle cx="1115" cy="584" r="4" fill="#ffcc00" stroke="#555" />

    <text x="686" y="367" fill="#ff00e6" className="text-[17px] font-bold">
      绿色尺寸标注的正是需要变化的关键尺寸
    </text>

    {/* forum logo */}
    <text x="1149" y="749" className="text-[42px] font-light italic">
      <tspan fill="#ff6633">野火</tspan>
      <tspan fill="#000">论坛</tspan>
    </text>
    <path
      d="M1220 694C1229 700 1234 710 1233 718C1232 726 1226 732 1217 735C1216 731 1219 728 1222 723C1225 717 1223 709 1217 702C1223 705 1227 710 1228 715C1229 708 1226 700 1220 694Z"
      fill="#ff6633"
    />
    <text x="1153" y="766" fill="#999" className="font-['Verdana','DejaVu_Sans',sans-serif] text-[15px] italic">
      www.proewildfire.cn
    </text>
  </svg>
);

const GraphicsToolbar = () => (
  <div className="absolute top-[7px] left-[86px] flex h-8 items-center gap-[2px] border border-[#9c9ea0] bg-[#f8f9fb] px-[3px]">
    {GRAPHICS_TOOLS.map((tool) => (
      <button
        key={tool.label}
        type="button"
        aria-label={tool.label}
        className={clsx(
          'relative flex size-6 items-center justify-center',
          tool.pressed && 'border border-[#aaa] bg-[#dfe0e2]'
        )}
      >
        {tool.icon}
        {tool.menu && (
          <span className="absolute right-0 bottom-0">
            <Svg w={4} h={4}>
              <path d="M4 0V4H0Z" fill="#444" />
            </Svg>
          </span>
        )}
      </button>
    ))}
  </div>
);

const App = () => {
  const [tab, setTab] = useState('尺寸');

  return (
    <div className="flex h-screen flex-col overflow-hidden border-t-2 border-[#7fafc0] bg-white font-['Noto_Sans','Noto_Sans_CJK_SC',sans-serif]">
      <TitleBar />
      <MenuBar />
      <Ribbon tab={tab} setTab={setTab} />
      <main className="flex min-h-0 flex-1">
        <ModelTree />
        <DimensionsPanel />
        <div className="relative flex-1">
          <ModelView />
          <GraphicsToolbar />
        </div>
      </main>
    </div>
  );
};

export default App;
